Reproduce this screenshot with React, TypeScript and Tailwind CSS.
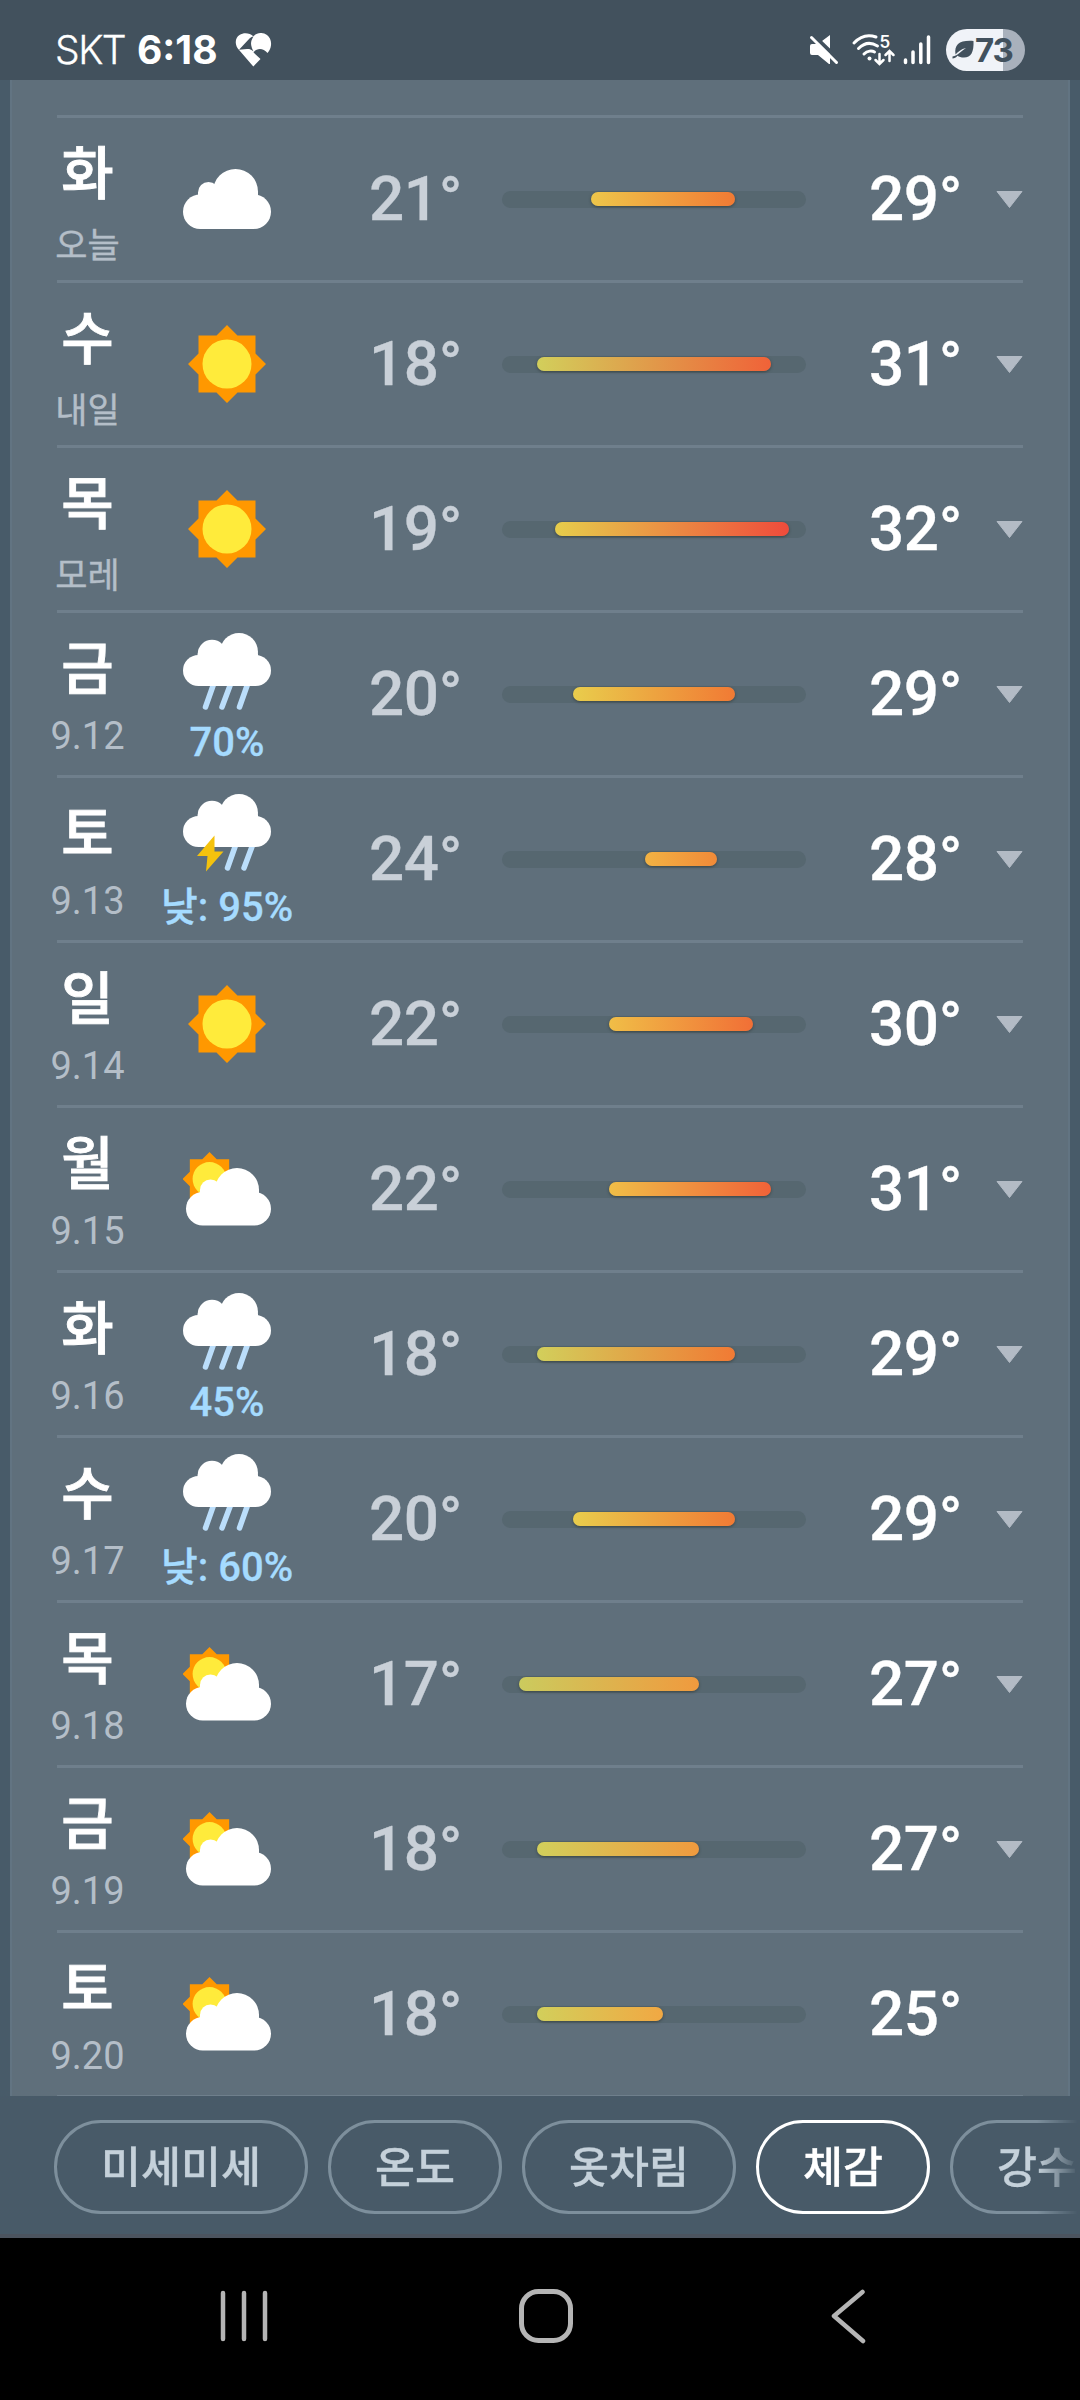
import clsx from 'clsx';

type Sky = 'cloud' | 'sun' | 'rain' | 'storm' | 'partly';

interface Forecast {
  day: string;
  date: string;
  sky: Sky;
  rain?: string;
  low: number;
  high: number;
  last?: boolean;
}

const forecasts: Forecast[] = [
  { day: '화', date: '오늘', sky: 'cloud', low: 21, high: 29 },
  { day: '수', date: '내일', sky: 'sun', low: 18, high: 31 },
  { day: '목', date: '모레', sky: 'sun', low: 19, high: 32 },
  { day: '금', date: '9.12', sky: 'rain', rain: '70%', low: 20, high: 29 },
  { day: '토', date: '9.13', sky: 'storm', rain: '낮: 95%', low: 24, high: 28 },
  { day: '일', date: '9.14', sky: 'sun', low: 22, high: 30 },
  { day: '월', date: '9.15', sky: 'partly', low: 22, high: 31 },
  { day: '화', date: '9.16', sky: 'rain', rain: '45%', low: 18, high: 29 },
  { day: '수', date: '9.17', sky: 'rain', rain: '낮: 60%', low: 20, high: 29 },
  { day: '목', date: '9.18', sky: 'partly', low: 17, high: 27 },
  { day: '금', date: '9.19', sky: 'partly', low: 18, high: 27 },
  { day: '토', date: '9.20', sky: 'partly', low: 18, high: 25, last: true },
];

const chips = [
  { label: '미세미세', width: 'w-[254px]' },
  { label: '온도', width: 'w-[174px]' },
  { label: '옷차림', width: 'w-[214px]' },
  { label: '체감', width: 'w-[174px]', active: true },
  { label: '강수', width: 'w-[174px]' },
];

// Temperature scale of the range track
const MIN_TEMP = 16;
const MAX_TEMP = 33;
const TRACK_WIDTH = 304;

const tempToX = (t: number) => ((t - MIN_TEMP) / (MAX_TEMP - MIN_TEMP)) * TRACK_WIDTH;

const tempColors: Record<number, string> = {
  17: '#cbcb5e',
  18: '#d2cf5b',
  19: '#e6cd4b',
  20: '#e9cd4c',
  21: '#eec64a',
  22: '#f0be47',
  24: '#f2b243',
  25: '#f1a843',
  27: '#f09a3e',
  28: '#f18a38',
  29: '#f17a34',
  30: '#f16f36',
  31: '#f06238',
  32: '#ef4b3b',
};

function SunShape() {
  return (
    <>
      <path
        fill="#ff9800"
        d="M0-39 10.5-28.5H28.5V-10.5L39 0 28.5 10.5V28.5H10.5L0 39-10.5 28.5H-28.5V10.5L-39 0-28.5-10.5V-28.5H-10.5Z"
      />
      <circle r="24.5" fill="#ffeb3b" />
    </>
  );
}

function SkyIcon({ sky }: { sky: Sky }) {
  if (sky === 'sun') {
    return (
      <svg width="80" height="80" viewBox="-40 -40 80 80">
        <SunShape />
      </svg>
    );
  }
  if (sky === 'cloud') {
    return (
      <svg width="88" height="60" viewBox="0 0 88 60" fill="#fff">
        <rect y="25.5" width="88" height="34.500" rx="17.200" />
        <circle cx="52.500" cy="22.500" r="22.500" />
        <circle cx="25.500" cy="23.500" r="10.500" />
        <rect x="15" y="23" width="60" height="20" />
      </svg>
    );
  }
  if (sky === 'partly') {
    return (
      <svg width="88" height="74" viewBox="0 0 88 74">
        <g transform="translate(26.500 27) scale(.69)">
          <SunShape />
        </g>
        <g fill="#fff">
          <rect x="3" y="40" width="85" height="33.500" rx="16.700" />
          <circle cx="54" cy="38" r="22" />
          <circle cx="27.500" cy="38" r="10.500" />
          <rect x="17" y="37.500" width="59" height="20" />
        </g>
      </svg>
    );
  }
  return (
    <svg width="88" height="78" viewBox="0 0 88 78">
      <g stroke="#bbdefb" strokeWidth="5.500" strokeLinecap="round">
        {sky === 'rain' ? (
          <path d="M31 50 22.500 74M48 50 39 74M65 50 56.500 74" />
        ) : (
          <path d="M53 50 44.500 74M70 50 61 74" />
        )}
      </g>
      <g fill="#fff">
        <rect y="22" width="88" height="31" rx="15.500" />
        <circle cx="56" cy="19" r="19" />
        <circle cx="29" cy="21" r="14.300" />
        <rect x="14.700" y="20.500" width="60.300" height="18" />
      </g>
      {sky === 'storm' && <path fill="#f4c20d" d="M31.500 41.500 14 62H24.500L23 77.500 40.500 57.500H31.500Z" />}
    </svg>
  );
}

function RangeBar({ low, high }: { low: number; high: number }) {
  const left = tempToX(low) - 0.5;
  return (
    <div className="h-[17px] w-[304px] rounded-full bg-[#566770] pt-[1px]">
      <div
        className="h-[14px] rounded-full shadow-[0_1px_3px_rgba(40,45,40,0.6)]"
        style={{
          marginLeft: left,
          width: tempToX(high) - left + 0.5,
          backgroundImage: `linear-gradient(to right, ${tempColors[low]}, ${tempColors[high]})`,
        }}
      />
    </div>
  );
}

function ForecastRow({ item }: { item: Forecast }) {
  const numericDate = item.date.includes('.');
  return (
    <div className="h-[165px] shrink-0 border-t-[3px] border-[#6f7f8c]">
      <div className="-ml-[10px] grid h-[162px] grid-cols-[80px_200px_175px_304px_190px_27px] items-center">
        <div className="flex h-full flex-col items-center pt-[26px] pl-px whitespace-nowrap">
          <span className="text-[57px] leading-[62px] font-medium text-white [-webkit-text-stroke:0.9px_white]">
            {item.day}
          </span>
          <span
            className={clsx(
              'text-[#b4bec8]',
              numericDate
                ? 'mt-[13px] text-[38px] leading-[44px]'
                : 'mt-[19px] text-[35px] leading-[44px] [-webkit-text-stroke:0.4px_#b4bec8]'
            )}
          >
            {item.date}
          </span>
        </div>

        {item.rain ? (
          <div className="flex h-full flex-col items-center justify-end pb-[8px]">
            <SkyIcon sky={item.sky} />
            <span
              className={clsx(
                'text-[40px] leading-[48px] font-medium whitespace-nowrap text-[#a5dbff] [-webkit-text-stroke:0.3px_#a5dbff]',
                item.rain.includes(':') ? 'mt-[12px]' : 'mt-[8px]'
              )}
            >
              {item.rain}
            </span>
          </div>
        ) : (
          <div className="flex justify-center">
            <SkyIcon sky={item.sky} />
          </div>
        )}

        <span className="pl-[42px] text-[62px] leading-[62px] font-medium tracking-[-0.4px] text-[#c9d0d8] [-webkit-text-stroke:0.3px_#c9d0d8]">
          {item.low}°
        </span>
        <RangeBar low={item.low} high={item.high} />
        <span className="pl-[63px] text-[62px] leading-[62px] font-medium tracking-[-0.4px] text-white [-webkit-text-stroke:0.3px_white]">
          {item.high}°
        </span>
        {!item.last && (
          <svg width="27" height="17" viewBox="0 0 27 17">
            <path d="M1 .5H26L13.500 16.500Z" fill="#b3bbc5" stroke="#b3bbc5" strokeLinejoin="round" />
          </svg>
        )}
      </div>
    </div>
  );
}

function StatusBar() {
  return (
    <header className="flex h-[80px] shrink-0 items-center justify-between bg-[#42515d] pt-[20px] pr-[55px] pl-[55px] font-['Inter','Noto_Sans_CJK_KR',sans-serif] text-white">
      <div className="flex items-center">
        <span className="w-[82px] text-[39px] leading-[60px] font-light tracking-[-1.5px] [-webkit-text-stroke:0.3px_white]">
          SKT
        </span>
        <span className="w-[98px] text-[39px] leading-[60px] font-bold">6:18</span>
        <svg width="37" height="34" viewBox="0 0 37 34">
          <path
            fill="#fff"
            d="M4.500 17.500C-1 12 0 5 4.500 2 9-1 15 0 18.300 3.300 22-.7 28-1 32 2 36.500 5.500 37.500 12 34 18L32.500 20C28 14.500 21.500 15 18.500 19.500L25.500 26 18.300 33.500Z"
          />
          <path
            d="M4 16.700 14.500 5.500C17 3.500 18 3.500 18.500 3.500 15 9 15.500 12 18.500 18.500 16 16 13.500 15.800 12 16Z"
            fill="#42515d"
          />
        </svg>
      </div>
      <div className="flex items-center">
        {/* Muted speaker */}
        <svg width="30" height="30" viewBox="0 0 30 30">
          <path fill="#fff" d="M1 11Q1 9 3 9H9L21 0V29H20L9 20H3Q1 20 1 18Z" />
          <path d="M2-2 32 27" stroke="#42515d" strokeWidth="4" />
          <path d="M2.500 2.500 27.500 27.500" stroke="#fff" strokeWidth="3" strokeLinecap="round" />
        </svg>
        {/* Wi-Fi */}
        <svg
          className="ml-[13px] overflow-visible"
          width="43"
          height="32"
          viewBox="0 0 43 32"
          fill="none"
          stroke="#fff"
          strokeLinecap="round"
        >
          <path d="M2 9C9 1.500 17 .5 24 3M6.500 14.500C12 9 19 8 25.500 12M12 20C15.500 16.500 20 16.500 22.500 18" strokeWidth="3" />
          <circle cx="17.500" cy="24.500" r="2" fill="#fff" stroke="none" />
          <path d="M27.500 20V29M23.500 26 27.500 30 31.500 26M37.500 27V18M33.500 21 37.500 17 41.500 21" strokeWidth="2.500" />
          <text x="27.500" y="14" fill="#fff" stroke="none" className="text-[17px] font-semibold">
            5
          </text>
        </svg>
        {/* Signal */}
        <svg className="ml-[8px]" width="28" height="30" viewBox="0 0 28 30">
          <path d="M2.500 25V27.500M10 17V27.500M17.800 9V27.500M25.500 2V27.500" stroke="#fff" strokeWidth="3.500" strokeLinecap="round" />
        </svg>
        <div className="ml-[15px] flex h-[42px] w-[79px] items-center rounded-full bg-[linear-gradient(to_right,#f0f3f8_72%,#a9b1bc_72%)] pl-[6px] text-[#42515d]">
          <svg width="22" height="20" viewBox="0 0 22 20">
            <path
              fill="#42515d"
              d="M21.500 1C22 12 19 17.500 12 17.500 9 17.500 7 16.800 5.500 15.700 4 17.500 2.500 18.500.5 18.500V16.500C6 15.500 9 11 14 8 9 9 6 12 3.500 14.500 2 4 8 0 21.500 1Z"
            />
          </svg>
          <span className="pl-px text-[33px] leading-[42px] font-bold tracking-[-1.2px]">73</span>
        </div>
      </div>
    </header>
  );
}

function ChipBar() {
  return (
    <div className="flex h-[142px] shrink-0 items-center border-b-[4px] border-[#4c545f] bg-[#485a68] pt-[4px] pl-[54px]">
      <div className="flex w-[1024px] gap-[20px] overflow-hidden [mask-image:linear-gradient(to_right,#000_96%,transparent)]">
        {chips.map((chip) => (
          <button
            key={chip.label}
            className={clsx(
              'flex h-[94px] shrink-0 items-center justify-center rounded-full border-[3px] pt-[3px] text-[43.500px] leading-[60px] font-medium',
              chip.width,
              chip.active
                ? 'border-white text-white [-webkit-text-stroke:0.3px_white]'
                : 'border-[#7d8f9c] text-[#c5d1da] [-webkit-text-stroke:0.3px_#c5d1da]'
            )}
          >
            {chip.label}
          </button>
        ))}
      </div>
    </div>
  );
}

function NavBar() {
  return (
    <nav className="flex h-[162px] shrink-0 items-start bg-black pt-[50px] pl-[219px]">
      <svg width="50" height="56" viewBox="0 0 50 56" stroke="#b5b5b5" strokeWidth="4.500" strokeLinecap="round">
        <path d="M4 5V51M25 5V51M46 5V51" />
      </svg>
      <svg className="ml-[249px]" width="56" height="56" viewBox="0 0 56 56">
        <rect x="3.500" y="3.500" width="49" height="49" rx="17" fill="none" stroke="#b5b5b5" strokeWidth="5" />
      </svg>
      <svg
        className="ml-[256px]"
        width="36"
        height="56"
        viewBox="0 0 36 56"
        fill="none"
        stroke="#b5b5b5"
        strokeWidth="4.500"
        strokeLinecap="round"
        strokeLinejoin="round"
      >
        <path d="M32.500 4 4 28 33 53" />
      </svg>
    </nav>
  );
}

export default function App() {
  return (
    <div className="flex h-[2400px] w-[1080px] flex-col overflow-hidden bg-[#485b69] font-['Roboto','Noto_Sans_CJK_KR',sans-serif]">
      <StatusBar />
      <main className="mx-[10px] h-[2016px] shrink-0 overflow-hidden border-x-[2px] border-[#627482] bg-[#5f6f7b] px-[45px] pt-[35px]">
        {forecasts.map((item) => (
          <ForecastRow key={item.date} item={item} />
        ))}
        <div className="h-[3px] bg-[#6f7f8c]" />
      </main>
      <ChipBar />
      <NavBar />
    </div>
  );
}
